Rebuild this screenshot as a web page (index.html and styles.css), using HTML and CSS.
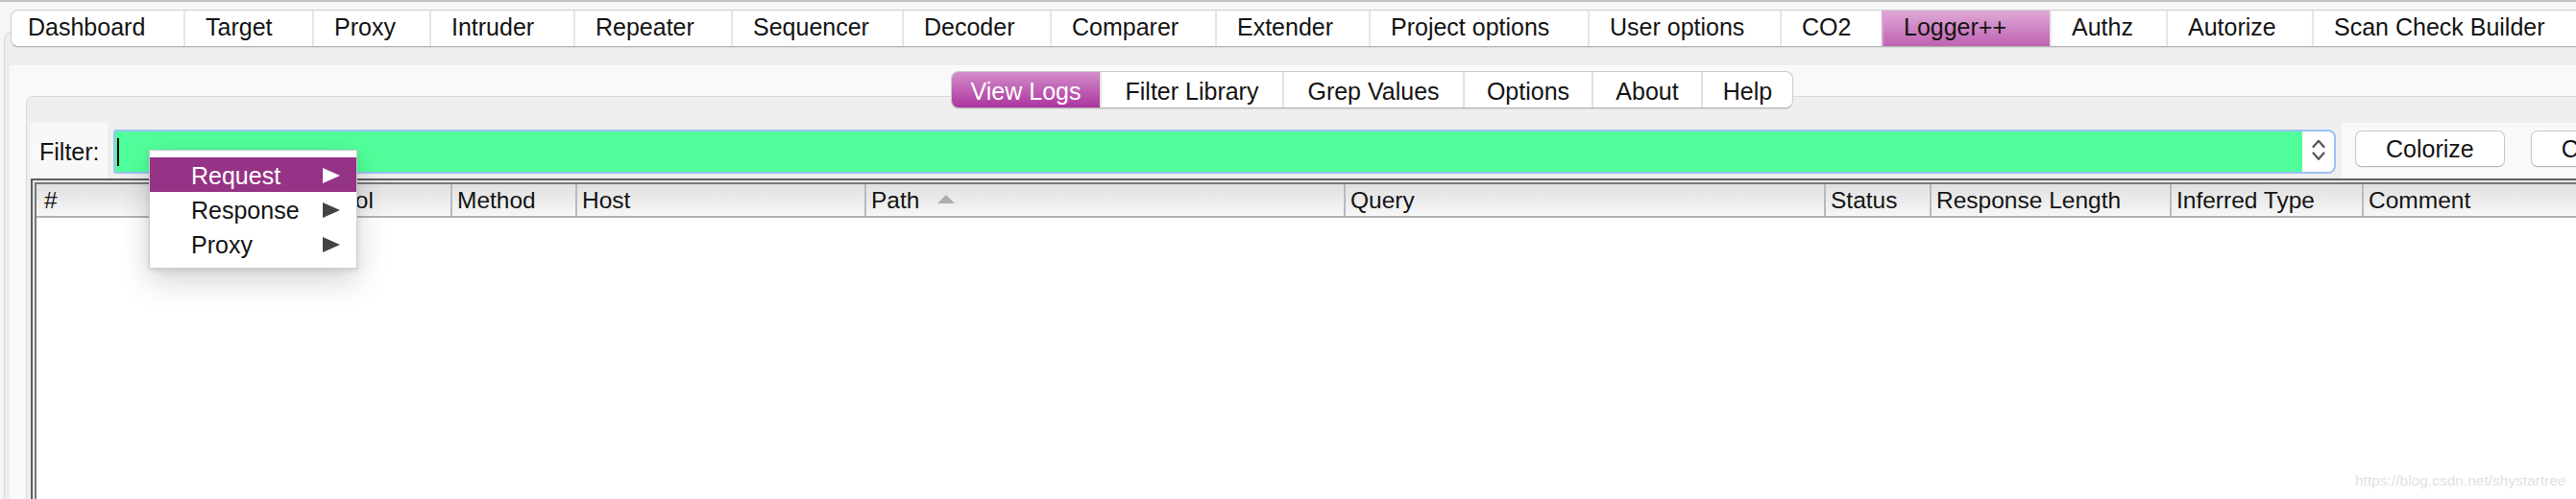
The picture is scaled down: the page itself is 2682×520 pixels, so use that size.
FILE: index.html
```html
<!DOCTYPE html>
<html>
<head>
<meta charset="utf-8">
<title>Burp Suite - Logger++</title>
<link rel="stylesheet" href="styles.css">
</head>
<body>
<div class="window">
  <nav class="main-tabs">
    <div class="tab">Dashboard</div>
    <div class="tab">Target</div>
    <div class="tab">Proxy</div>
    <div class="tab">Intruder</div>
    <div class="tab">Repeater</div>
    <div class="tab">Sequencer</div>
    <div class="tab">Decoder</div>
    <div class="tab">Comparer</div>
    <div class="tab">Extender</div>
    <div class="tab">Project options</div>
    <div class="tab">User options</div>
    <div class="tab">CO2</div>
    <div class="tab active">Logger++</div>
    <div class="tab">Authz</div>
    <div class="tab">Autorize</div>
    <div class="tab">Scan Check Builder</div>
  </nav>
  <div class="main-pane">
    <div class="logger">
      <nav class="sub-tabs">
        <div class="stab active">View Logs</div>
        <div class="stab">Filter Library</div>
        <div class="stab">Grep Values</div>
        <div class="stab">Options</div>
        <div class="stab">About</div>
        <div class="stab">Help</div>
      </nav>
      <div class="sub-pane">
        <div class="filter-row">
          <div class="filter-label">Filter:</div>
          <div class="filter-field">
            <div class="combo">
              <div class="combo-input"><span class="caret"></span></div>
              <div class="combo-arrows">
                <svg width="14" height="26" viewBox="0 0 14 26">
                  <polyline points="1.5,8 7,1.8 12.5,8" fill="none" stroke="#555" stroke-width="2.2" stroke-linecap="round" stroke-linejoin="round"/>
                  <polyline points="1.5,14.5 7,20.8 12.5,14.5" fill="none" stroke="#555" stroke-width="2.2" stroke-linecap="round" stroke-linejoin="round"/>
                </svg>
              </div>
            </div>
          </div>
          <div class="filter-buttons">
            <button class="btn">Colorize</button>
            <button class="btn">Clear Logs</button>
          </div>
        </div>
        <div class="table">
          <div class="table-inner">
            <div class="thead">
              <div class="th">#</div>
              <div class="th">Tool</div>
              <div class="th">Protocol</div>
              <div class="th">Method</div>
              <div class="th">Host</div>
              <div class="th">Path<span class="sort-up"></span></div>
              <div class="th">Query</div>
              <div class="th">Status</div>
              <div class="th">Response Length</div>
              <div class="th">Inferred Type</div>
              <div class="th">Comment</div>
            </div>
            <div class="tbody"></div>
          </div>
        </div>
      </div>
    </div>
  </div>
</div>

<div class="popup">
  <div class="mi hl"><span>Request</span><span class="sub-arrow"></span></div>
  <div class="mi"><span>Response</span><span class="sub-arrow"></span></div>
  <div class="mi"><span>Proxy</span><span class="sub-arrow"></span></div>
</div>

<div class="watermark">https://blog.csdn.net/shystartree</div>
</body>
</html>
```

FILE: styles.css
```css
* { box-sizing: border-box; }

html, body { margin: 0; padding: 0; }

body {
  position: relative;
  width: 2682px;
  height: 520px;
  overflow: hidden;
  background: #f6f6f6;
  border-top: 2px solid #c3c3c3;
  font-family: "Liberation Sans", Arial, sans-serif;
  font-size: 25px;
  color: #141414;
}

.window {
  width: 2840px;
  padding-top: 8px;
}

/* ---------- main tab strip ---------- */
.main-tabs {
  position: relative;
  z-index: 1;
  margin-left: 11px;
  width: max-content;
  height: 39px;
  display: grid;
  grid-template-columns: 179px 134px 122px 150px 164px 178px 154px 172px 160px 228px 200px 106px 175px 121px 152px 290px;
  background: #fff;
  border: 1px solid #d0d0d0;
  border-bottom-color: #b4b4b4;
  border-radius: 8px 0 0 8px;
  box-shadow: 0 1px 1px rgba(0, 0, 0, 0.08);
  overflow: hidden;
}

.tab {
  display: flex;
  align-items: center;
  justify-content: flex-start;
  padding: 0 0 3px 21px;
  border-left: 2px solid #e6e6e6;
  white-space: nowrap;
}

.tab:first-child {
  border-left: none;
  padding-left: 17px;
}

.tab.active {
  background: linear-gradient(#dea9d6, #bf62b2);
  border-left-color: #d9a0d0;
}

/* ---------- main pane ---------- */
.main-pane {
  margin: -16px 0 0 4px;
  height: 600px;
  background: #eeeeee;
  border: 1px solid #d8d8d8;
  border-radius: 8px 0 0 0;
  padding: 34px 0 0 5px;
}

.logger {
  height: 600px;
  background: #f9f9f9;
  padding-top: 6px;
}

/* ---------- sub tab strip ---------- */
.sub-tabs {
  position: relative;
  z-index: 1;
  margin-left: 980px;
  width: max-content;
  height: 39px;
  display: grid;
  grid-template-columns: 154px 190px 188px 134px 114px 95px;
  background: #fff;
  border: 1px solid #cbcbcb;
  border-bottom-color: #b2b2b2;
  border-radius: 8px;
  box-shadow: 0 1px 1px rgba(0, 0, 0, 0.08);
  overflow: hidden;
}

.stab {
  display: flex;
  align-items: center;
  justify-content: center;
  padding-top: 4px;
  border-left: 2px solid #e2e2e2;
  white-space: nowrap;
}

.stab:first-child { border-left: none; }

.stab.active {
  background: linear-gradient(#d28dca, #ac359e);
  color: #fff;
}

/* ---------- sub pane ---------- */
.sub-pane {
  margin: -13px 0 0 17px;
  width: 2777px;
  background: #efefef;
  border: 1px solid #d9d9d9;
  border-radius: 8px 0 0 0;
  padding: 27px 0 0 4px;
}

.filter-row {
  display: flex;
  height: 58px;
}

.filter-label {
  width: 80px;
  background: #f8f8f8;
  display: flex;
  align-items: center;
  padding: 3px 0 0 9px;
}

.filter-field {
  flex: 1;
  padding: 7px 6px 5px 6px;
}

.combo {
  height: 100%;
  display: flex;
  background: #fff;
  border: 2px solid #9dc1f3;
  border-radius: 3px 8px 8px 3px;
  overflow: hidden;
}

.combo-input {
  flex: 1;
  display: flex;
  align-items: center;
  padding-left: 2px;
  background: #50ff9b;
}

.caret {
  width: 2px;
  height: 29px;
  background: #000;
}

.combo-arrows {
  width: 33px;
  display: flex;
  align-items: center;
  justify-content: center;
}

.filter-buttons {
  width: 365px;
  background: #f9f9f9;
  display: flex;
  align-items: center;
  gap: 27px;
  padding: 0 0 4px 14px;
}

.btn {
  flex: none;
  height: 38px;
  padding: 0 31px;
  font: inherit;
  color: #141414;
  background: #fff;
  border: 1px solid #c8c8c8;
  border-bottom-color: #b6b6b6;
  border-radius: 7px;
  box-shadow: 0 1px 1px rgba(0, 0, 0, 0.06);
  white-space: nowrap;
}

/* ---------- table ---------- */
.table {
  height: 340px;
  background: #e7e7e7;
  border-top: 2px solid #5e5e5e;
  border-left: 2px solid #5e5e5e;
  padding: 2px 0 0 2px;
}

.table-inner {
  height: 100%;
  background: #fff;
  border-top: 2px solid #787878;
  border-left: 2px solid #787878;
}

.thead {
  display: grid;
  grid-template-columns: 132px 122px 177px 130px 301px 499px 500px 110px 250px 200px 1fr;
  height: 35px;
  background: linear-gradient(#e0e0e0, #f7f7f7);
  border-bottom: 2px solid #b3b3b3;
}

.th {
  display: flex;
  align-items: center;
  padding-left: 5px;
  border-left: 2px solid #bababa;
  font-size: 24.5px;
  white-space: nowrap;
  overflow: hidden;
}

.th:first-child {
  border-left: none;
  padding-left: 8px;
}

.sort-up {
  width: 0;
  height: 0;
  margin: -2px 0 0 19px;
  border-left: 9px solid transparent;
  border-right: 9px solid transparent;
  border-bottom: 9px solid #adadad;
}

/* ---------- popup menu (overlay) ---------- */
.popup {
  position: absolute;
  left: 155px;
  top: 154px;
  width: 217px;
  padding: 7px 0 7px 0;
  background: #fff;
  border: 1px solid #cdcdcd;
  box-shadow: 0 12px 30px rgba(0, 0, 0, 0.18), 0 2px 6px rgba(0, 0, 0, 0.1);
  z-index: 10;
}

.mi {
  height: 36px;
  display: flex;
  align-items: center;
  justify-content: space-between;
  padding: 2px 17px 0 43px;
  color: #141414;
}

.mi.hl {
  background: #953386;
  color: #fff;
}

.sub-arrow {
  width: 0;
  height: 0;
  border-top: 8px solid transparent;
  border-bottom: 8px solid transparent;
  border-left: 18px solid #444;
}

.mi.hl .sub-arrow { border-left-color: #fff; }

/* ---------- watermark (overlay) ---------- */
.watermark {
  position: absolute;
  left: 2452px;
  top: 490px;
  font-family: "Liberation Sans", Arial, sans-serif;
  font-size: 15.5px;
  color: #e2e2e2;
  white-space: nowrap;
}
```
